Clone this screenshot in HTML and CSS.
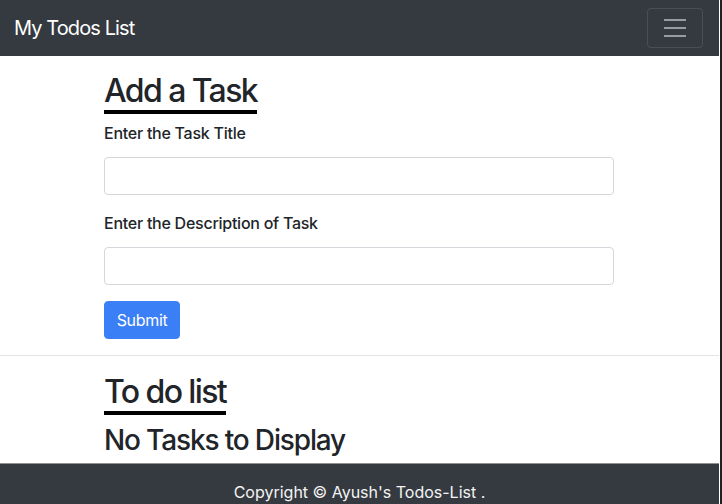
FILE: index.html
```html
<!DOCTYPE html>
<html lang="en">
<head>
<meta charset="utf-8">
<title>My Todos List</title>
<link rel="stylesheet" href="styles.css">
</head>
<body>
<div class="page">
  <nav class="navbar">
    <a class="brand" href="#">My Todos List</a>
    <button class="toggler" type="button" aria-label="Toggle navigation">
      <svg width="30" height="30" viewBox="0 0 30 30"><path stroke="rgba(255,255,255,0.5)" stroke-linecap="butt" stroke-width="2" d="M4 7h22M4 15h22M4 23h22"/></svg>
    </button>
  </nav>

  <div class="container top">
    <h2 class="heading">Add a Task</h2>
    <form class="form">
      <div class="group">
        <label class="label" for="title">Enter the Task Title</label>
        <input class="input" id="title" type="text">
      </div>
      <div class="group">
        <label class="label" for="desc">Enter the Description of Task</label>
        <input class="input" id="desc" type="text">
      </div>
      <button class="btn" type="button">Submit</button>
    </form>
  </div>

  <hr class="divider">

  <div class="container bottom">
    <h2 class="heading">To do list</h2>
    <h3 class="empty">No Tasks to Display</h3>
  </div>

  <footer class="footer">Copyright &copy; Ayush's Todos-List .</footer>
</div>
</body>
</html>
```

FILE: styles.css
```css
html, body {
  margin: 0;
  padding: 0;
  height: 100%;
  overflow: hidden;
  background: #fff;
}
body {
  font-family: Inter, "Liberation Sans", Arial, sans-serif;
  font-size: 16px;
  line-height: 24px;
  color: #212529;
  display: flex;
  border-right: 2px solid #1f2023;
  box-sizing: border-box;
  padding-right: 1px;
}
.page {
  flex: 1;
  display: flex;
  flex-direction: column;
  min-width: 0;
}
.page > * { flex-shrink: 0; }
.navbar {
  height: 56px;
  box-sizing: border-box;
  background: #343a40;
  display: flex;
  align-items: center;
  justify-content: space-between;
  padding: 0 16px 0 14px;
}
.brand {
  color: #fff;
  text-decoration: none;
  font-size: 20px;
  line-height: 30px;
  letter-spacing: -0.045em;
}
.toggler {
  width: 56px;
  height: 40px;
  box-sizing: border-box;
  background: transparent;
  border: 1px solid rgba(255,255,255,0.1);
  border-radius: 4px;
  padding: 4px 12px;
  display: flex;
  align-items: center;
  justify-content: center;
  margin-top: -1px;
}
.toggler svg { display: block; }
.container {
  width: 510px;
  margin: 0 auto;
  padding-right: 1px;
  display: flex;
  flex-direction: column;
  align-items: flex-start;
}
.container.top { margin-top: 16px; margin-bottom: 16px; }
.container.bottom { margin-top: 17px; }
.heading {
  margin: 0 0 7px 0;
  font-size: 32px;
  line-height: 38px;
  font-weight: 500;
  letter-spacing: -0.05em;
  border-bottom: 4px solid #000;
}
.bottom .heading { margin-bottom: 8px; }
.form {
  width: 100%;
  display: flex;
  flex-direction: column;
  align-items: flex-start;
}
.group {
  width: 100%;
  margin-bottom: 16px;
}
.label {
  display: block;
  margin-bottom: 12px;
  font-weight: 500;
  font-size: 16px;
  line-height: 24px;
  letter-spacing: -0.016em;
}
.input {
  display: block;
  width: 100%;
  height: 38px;
  box-sizing: border-box;
  border: 1px solid #d4d7dc;
  border-radius: 4px;
  padding: 6px 12px;
  font: inherit;
  background: #fff;
}
.btn {
  height: 38px;
  width: 76px;
  box-sizing: border-box;
  border: 1px solid #3b7ff6;
  background: #3b7ff6;
  color: #fff;
  border-radius: 4px;
  font: inherit;
  font-size: 16px;
  padding: 6px 10px;
  letter-spacing: -0.02em;
}
.divider {
  margin: 0;
  border: 0;
  border-top: 1px solid #e4e4e4;
}
.empty {
  margin: 0 0 6px 0;
  font-size: 28px;
  line-height: 34px;
  font-weight: 500;
  letter-spacing: -0.041em;
}
.footer {
  height: 41px;
  box-sizing: border-box;
  overflow: hidden;
  background: #343a40;
  border-top: 1px solid #8d8f91;
  color: #f4f4f4;
  text-align: center;
  padding-top: 16px;
  font-size: 16px;
  line-height: 24px;
}
```
